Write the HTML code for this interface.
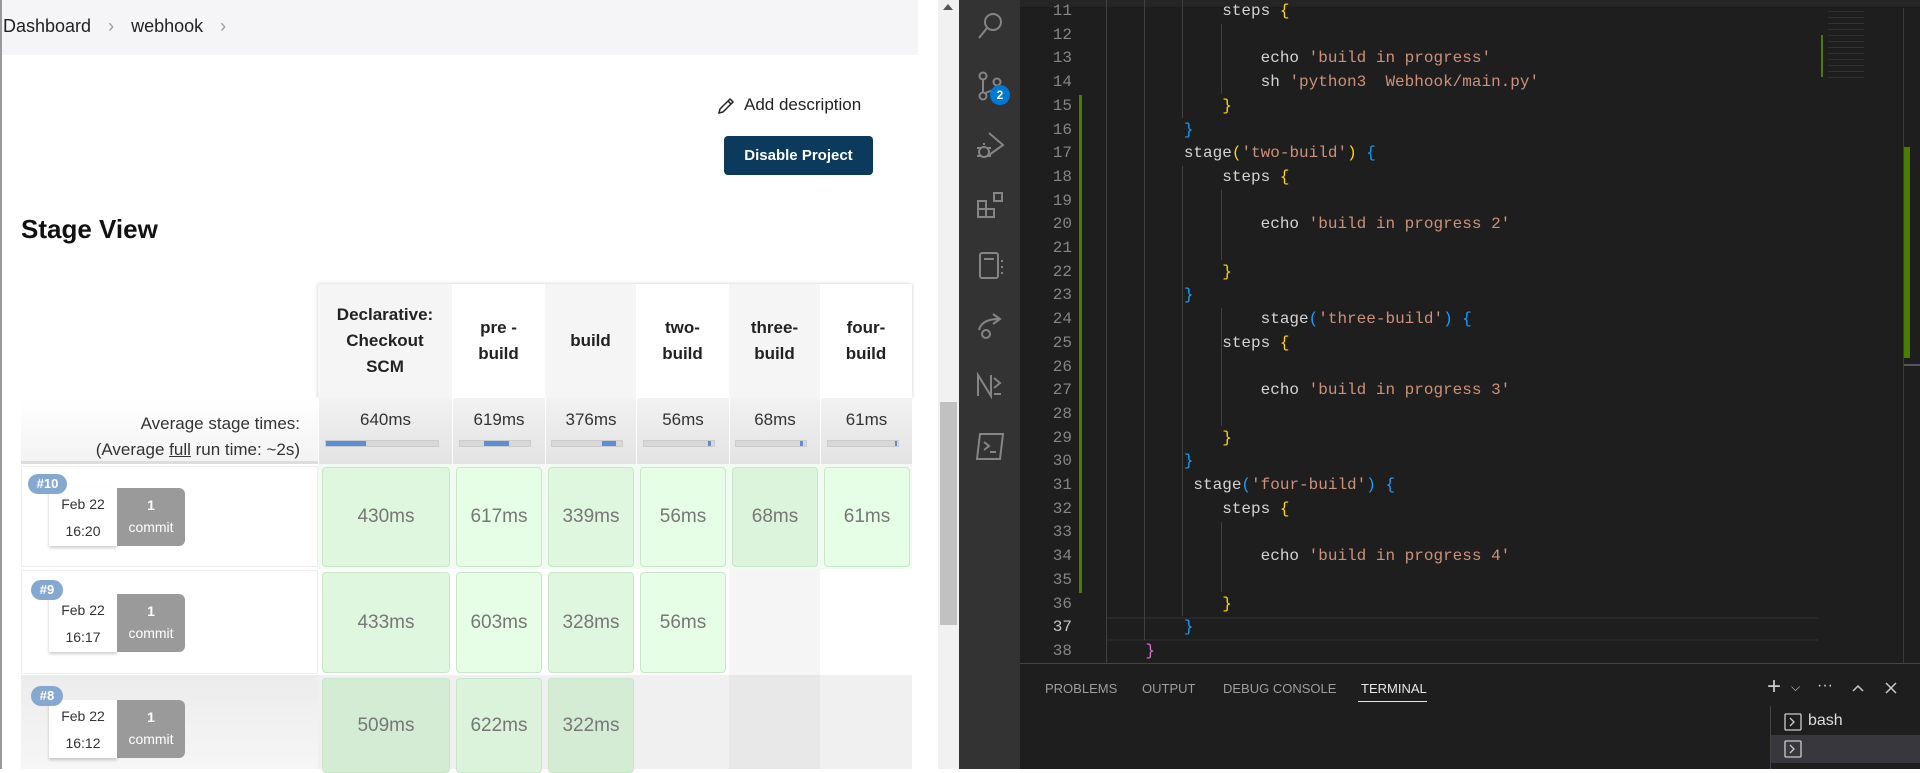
<!DOCTYPE html>
<html><head><meta charset="utf-8"><style>
*{margin:0;padding:0;box-sizing:border-box}
body{width:1920px;height:769px;overflow:hidden;position:relative;background:#fff;font-family:"Liberation Sans",sans-serif}
.a{position:absolute}
.hc{position:absolute;top:284px;height:114px;display:flex;align-items:center;justify-content:center;text-align:center;font-weight:bold;font-size:17px;line-height:26px;color:#222}
.av{position:absolute;top:398px;height:66px;background:linear-gradient(#f2f2f2,#e3e3e3);border-left:1px solid #fff;text-align:center;font-size:17px;color:#333;padding-top:12px}
.pb{position:absolute;top:440px;height:7px;background:#d8d8d8;border:1px solid #ccc}
.pb i{position:absolute;top:0;height:5px;background:#5b8ed4}
.cell{position:absolute;border:1px solid #c9e6c9;border-radius:4px;background:#e1f8e1;color:#777;font-size:19px;display:flex;align-items:center;justify-content:center}
.bd{position:absolute;left:28px;width:39px;height:20px;border-radius:10px;background:#84a8d0;color:#fff;font-size:13px;font-weight:bold;text-align:center;line-height:20px}
.dt{position:absolute;left:49px;width:68px;height:58px;background:#fff;box-shadow:0 2px 3px rgba(0,0,0,.2);font-size:14px;color:#333;text-align:center;line-height:27px;padding-top:3px}
.cm{position:absolute;left:117px;width:68px;height:58px;background:#9a9a9a;border-radius:0 6px 6px 0;color:#fff;font-size:14px;text-align:center;line-height:22px;padding-top:6px}
pre{font-family:"Liberation Mono",monospace;font-size:16px;line-height:23.7px;color:#d4d4d4}
.s{color:#ce9178}.y{color:#ffd700}.b{color:#179fff}.p{color:#da70d6}
.ln{position:absolute;left:1020px;width:52px;text-align:right;font-family:"Liberation Mono",monospace;font-size:16px;line-height:23.7px;color:#858585}
.ic{position:absolute;left:975px;width:30px;height:30px}
.tb{position:absolute;top:681px;font-size:13px;color:#9d9d9d}
</style></head><body>
<div class="a" style="left:0;top:0;width:2px;height:769px;background:#999"></div>
<div class="a" style="left:2px;top:0;width:916px;height:55px;background:#f5f5f7"></div>
<div class="a" style="left:3px;top:16px;font-size:18px;color:#222">Dashboard <span style="color:#999;margin:0 12px">&#x203A;</span> webhook <span style="color:#999;margin-left:12px">&#x203A;</span></div>
<svg class="a" style="left:716px;top:96px" width="20" height="20" viewBox="0 0 20 20"><path d="M3 17l1-4L14 3l3 3L7 16z M12 5l3 3" fill="none" stroke="#222" stroke-width="1.5"/></svg>
<div class="a" style="left:744px;top:95px;font-size:17px;color:#222">Add description</div>
<div class="a" style="left:724px;top:136px;width:149px;height:39px;background:#0b3a5c;border-radius:4px;color:#fff;font-weight:bold;font-size:15px;text-align:center;line-height:39px">Disable Project</div>
<div class="a" style="left:21px;top:214px;font-size:26px;font-weight:bold;color:#111">Stage View</div>
<div class="a" style="left:318px;top:284px;width:594px;height:114px;box-shadow:0 0 4px rgba(0,0,0,.2)"></div>
<div class="hc" style="left:318px;width:134px;background:#f5f5f5">Declarative:<br>Checkout<br>SCM</div>
<div class="hc" style="left:452px;width:93px;background:#fff">pre -<br>build</div>
<div class="hc" style="left:545px;width:91px;background:#f5f5f5">build</div>
<div class="hc" style="left:636px;width:93px;background:#fff">two-<br>build</div>
<div class="hc" style="left:729px;width:91px;background:#f5f5f5">three-<br>build</div>
<div class="hc" style="left:820px;width:92px;background:#fff">four-<br>build</div>
<div class="a" style="left:21px;top:398px;width:297px;height:66px;background:linear-gradient(#fff,#f3f3f3);border-bottom:3px solid #ddd"></div>
<div class="a" style="left:21px;top:411px;width:279px;text-align:right;font-size:17px;color:#333;line-height:26px">Average stage times:<br>(Average <u>full</u> run time: ~2s)</div>
<div class="av" style="left:318px;width:134px">640ms</div>
<div class="av" style="left:452px;width:93px">619ms</div>
<div class="av" style="left:545px;width:91px">376ms</div>
<div class="av" style="left:636px;width:93px">56ms</div>
<div class="av" style="left:729px;width:91px">68ms</div>
<div class="av" style="left:820px;width:92px">61ms</div>
<div class="pb" style="left:325px;width:114px"><i style="left:0;width:40px"></i></div>
<div class="pb" style="left:459px;width:72px"><i style="left:24px;width:25px"></i></div>
<div class="pb" style="left:551px;width:72px"><i style="left:50px;width:14px"></i></div>
<div class="pb" style="left:643px;width:72px"><i style="left:64px;width:3px"></i></div>
<div class="pb" style="left:735px;width:72px"><i style="left:64px;width:3px"></i></div>
<div class="pb" style="left:827px;width:72px"><i style="left:67px;width:2px"></i></div>
<div class="a" style="left:21px;top:466px;width:297px;height:101px;border:1px solid #eee;background:#fff"></div>
<div class="a" style="left:21px;top:570px;width:297px;height:104px;border:1px solid #eee;background:#fff"></div>
<div class="a" style="left:21px;top:675px;width:297px;height:94px;background:linear-gradient(#ececec,#f6f6f6)"></div>
<div class="dt" style="top:488px">Feb 22<br>16:20</div><div class="cm" style="top:488px"><b>1</b><br>commit</div><div class="bd" style="top:474px">#10</div>
<div class="dt" style="top:594px">Feb 22<br>16:17</div><div class="cm" style="top:594px"><b>1</b><br>commit</div><div class="bd" style="top:580px;left:31px;width:32px">#9</div>
<div class="dt" style="top:700px">Feb 22<br>16:12</div><div class="cm" style="top:700px"><b>1</b><br>commit</div><div class="bd" style="top:686px;left:31px;width:32px">#8</div>
<div class="a" style="left:318px;top:569px;width:594px;height:106px;background:#fff"></div>
<div class="a" style="left:729px;top:569px;width:91px;height:106px;background:#f5f5f5"></div>
<div class="a" style="left:318px;top:675px;width:594px;height:94px;background:#f0f0f0"></div>
<div class="a" style="left:729px;top:675px;width:91px;height:94px;background:#e8e8e8"></div>
<div class="a" style="left:318px;top:464px;width:594px;height:105px;background:#f2fbf2"></div>
<div class="cell" style="left:322px;top:467px;width:128px;height:100px;background:#dff6df">430ms</div>
<div class="cell" style="left:456px;top:467px;width:86px;height:100px;background:#e6fde6">617ms</div>
<div class="cell" style="left:548px;top:467px;width:86px;height:100px;background:#dff6df">339ms</div>
<div class="cell" style="left:640px;top:467px;width:86px;height:100px;background:#e6fde6">56ms</div>
<div class="cell" style="left:732px;top:467px;width:86px;height:100px;background:#dcf4dc">68ms</div>
<div class="cell" style="left:824px;top:467px;width:86px;height:100px;background:#e6fde6">61ms</div>
<div class="cell" style="left:322px;top:572px;width:128px;height:101px;background:#dff6df">433ms</div>
<div class="cell" style="left:456px;top:572px;width:86px;height:101px;background:#e6fde6">603ms</div>
<div class="cell" style="left:548px;top:572px;width:86px;height:101px;background:#dff6df">328ms</div>
<div class="cell" style="left:640px;top:572px;width:86px;height:101px;background:#e6fde6">56ms</div>
<div class="cell" style="left:322px;top:678px;width:128px;height:95px;background:#d3ecd3">509ms</div>
<div class="cell" style="left:456px;top:678px;width:86px;height:95px;background:#daf3da">622ms</div>
<div class="cell" style="left:548px;top:678px;width:86px;height:95px;background:#d3ecd3">322ms</div>
<div class="a" style="left:938px;top:0;width:21px;height:769px;background:#f1f1f1"></div>
<div class="a" style="left:943px;top:4px;width:0;height:0;border-left:5px solid transparent;border-right:5px solid transparent;border-bottom:6px solid #555"></div>
<div class="a" style="left:940px;top:402px;width:17px;height:223px;background:#c1c1c1"></div>
<div class="a" style="left:959px;top:0;width:961px;height:769px;background:#1e1e1e"></div>
<div class="a" style="left:959px;top:0;width:61px;height:769px;background:#333"></div>
<div class="a" style="left:1020px;top:0;width:900px;height:7px;background:#252526"></div>
<svg class="ic" style="top:10px" viewBox="0 0 30 30" fill="none" stroke="#858585" stroke-width="2"><circle cx="18" cy="12" r="8"/><path d="M12 18L4 28"/></svg>
<svg class="ic" style="top:71px" viewBox="0 0 30 30" fill="none" stroke="#858585" stroke-width="2"><circle cx="8" cy="5" r="3.5"/><circle cx="8" cy="25" r="3.5"/><circle cx="22" cy="11" r="3.5"/><path d="M8 9v12M22 15c0 6-10 4-12 8"/></svg>
<div class="a" style="left:990px;top:85px;width:20px;height:20px;border-radius:10px;background:#0078d4;color:#fff;font-size:12px;font-weight:bold;text-align:center;line-height:20px">2</div>
<svg class="ic" style="top:130px" viewBox="0 0 30 30" fill="none" stroke="#858585" stroke-width="2"><path d="M14 3l14 12-14 10"/><circle cx="9" cy="22" r="5"/><path d="M2 18h4M2 26h4M12 18h4M12 26h4M9 15v-2"/></svg>
<svg class="ic" style="top:190px" viewBox="0 0 30 30" fill="none" stroke="#858585" stroke-width="2"><rect x="3" y="11" width="8" height="8"/><rect x="3" y="19" width="8" height="8"/><rect x="11" y="19" width="8" height="8"/><rect x="19" y="3" width="8" height="8"/></svg>
<svg class="ic" style="top:250px" viewBox="0 0 30 30" fill="none" stroke="#858585" stroke-width="2"><rect x="5" y="3" width="18" height="25" rx="2"/><path d="M9 9h10M27 10v2M27 16v2M27 22v2"/></svg>
<svg class="ic" style="top:310px" viewBox="0 0 30 30" fill="none" stroke="#858585" stroke-width="2"><path d="M4 20c2-8 10-11 20-11M18 4l7 5-7 5"/><circle cx="11" cy="24" r="4"/></svg>
<svg class="ic" style="top:370px" viewBox="0 0 30 30" fill="none" stroke="#858585" stroke-width="2"><path d="M3 26V5l13 21V5M19 8l6 5-6 5M19 24h7"/></svg>
<svg class="ic" style="top:431px" viewBox="0 0 30 30" fill="none" stroke="#858585" stroke-width="2"><path d="M5 3h23l-3 25H2z"/><path d="M9 11l5 4-5 4M15 21h6"/></svg>
<pre class="ln" style="top:0">11
12
13
14
15
16
17
18
19
20
21
22
23
24
25
26
27
28
29
30
31
32
33
34
35
36
<span style="color:#c6c6c6">37</span>
38</pre>
<div class="a" style="left:1079px;top:95px;width:3px;height:498px;background:#487e02"></div>
<div class="a" style="left:1106px;top:617px;width:712px;height:24px;border-top:2px solid #282828;border-bottom:2px solid #282828"></div>
<div class="a" style="left:1106px;top:0;width:1px;height:664px;background:#404040"></div>
<div class="a" style="left:1144px;top:0;width:1px;height:640px;background:#404040"></div>
<div class="a" style="left:1182px;top:0;width:1px;height:118px;background:#404040"></div>
<div class="a" style="left:1182px;top:166px;width:1px;height:450px;background:#404040"></div>
<div class="a" style="left:1221px;top:24px;width:1px;height:70px;background:#404040"></div>
<div class="a" style="left:1221px;top:190px;width:1px;height:70px;background:#404040"></div>
<div class="a" style="left:1221px;top:308px;width:1px;height:118px;background:#404040"></div>
<div class="a" style="left:1221px;top:522px;width:1px;height:70px;background:#404040"></div>
<pre class="a" style="left:1107px;top:0">            steps <span class="y">{</span>

                echo <span class="s">'build in progress'</span>
                sh <span class="s">'python3  Webhook/main.py'</span>
            <span class="y">}</span>
        <span class="b">}</span>
        stage<span class="y">(</span><span class="s">'two-build'</span><span class="y">)</span> <span class="b">{</span>
            steps <span class="y">{</span>

                echo <span class="s">'build in progress 2'</span>

            <span class="y">}</span>
        <span class="b">}</span>
                stage<span class="b">(</span><span class="s">'three-build'</span><span class="b">)</span> <span class="b">{</span>
            steps <span class="y">{</span>

                echo <span class="s">'build in progress 3'</span>

            <span class="y">}</span>
        <span class="b">}</span>
         stage<span class="b">(</span><span class="s">'four-build'</span><span class="b">)</span> <span class="b">{</span>
            steps <span class="y">{</span>

                echo <span class="s">'build in progress 4'</span>

            <span class="y">}</span>
        <span class="b">}</span>
    <span class="p">}</span></pre>
<div class="a" style="left:1821px;top:35px;width:2px;height:42px;background:#487e02"></div>
<div class="a" style="left:1828px;top:8px;width:36px;height:74px;background:repeating-linear-gradient(#1e1e1e 0 3px,#444 3px 4px,#1e1e1e 4px 6px);opacity:.5"></div>
<div class="a" style="left:1903px;top:8px;width:1px;height:656px;background:#3a3a3a"></div>
<div class="a" style="left:1904px;top:147px;width:6px;height:211px;background:#487e02"></div>
<div class="a" style="left:1904px;top:364px;width:16px;height:2px;background:#555"></div>
<div class="a" style="left:1020px;top:663px;width:900px;height:1px;background:#444"></div>
<div class="tb" style="left:1045px">PROBLEMS</div>
<div class="tb" style="left:1142px">OUTPUT</div>
<div class="tb" style="left:1223px">DEBUG CONSOLE</div>
<div class="tb" style="left:1361px;color:#e7e7e7">TERMINAL</div>
<div class="a" style="left:1358px;top:701px;width:69px;height:1px;background:#e7e7e7"></div>
<div class="a" style="left:1767px;top:673px;font-size:24px;color:#ccc;font-weight:300">+</div>
<div class="a" style="left:1791px;top:680px;font-size:12px;color:#ccc">⌵</div>
<div class="a" style="left:1817px;top:677px;font-size:16px;color:#ccc">···</div>
<svg class="a" style="left:1850px;top:680px" width="16" height="16"><path d="M3 11l5-5 5 5" fill="none" stroke="#ccc" stroke-width="1.5"/></svg>
<svg class="a" style="left:1883px;top:680px" width="16" height="16"><path d="M3 3l10 10M13 3L3 13" fill="none" stroke="#ccc" stroke-width="1.5"/></svg>
<div class="a" style="left:1770px;top:706px;width:1px;height:63px;background:#444"></div>
<div class="a" style="left:1771px;top:735px;width:149px;height:28px;background:#37373d"></div>
<svg class="a" style="left:1784px;top:713px" width="18" height="18"><rect x="1" y="1" width="16" height="16" rx="1" fill="none" stroke="#ccc" stroke-width="1.3"/><path d="M6 5l4 4-4 4" fill="none" stroke="#ccc" stroke-width="1.3"/></svg>
<div class="a" style="left:1808px;top:712px;font-size:16px;color:#ddd">bash</div>
<svg class="a" style="left:1784px;top:740px" width="18" height="18"><rect x="1" y="1" width="16" height="16" rx="1" fill="none" stroke="#ccc" stroke-width="1.3"/><path d="M6 5l4 4-4 4" fill="none" stroke="#ccc" stroke-width="1.3"/></svg>
</body></html>
